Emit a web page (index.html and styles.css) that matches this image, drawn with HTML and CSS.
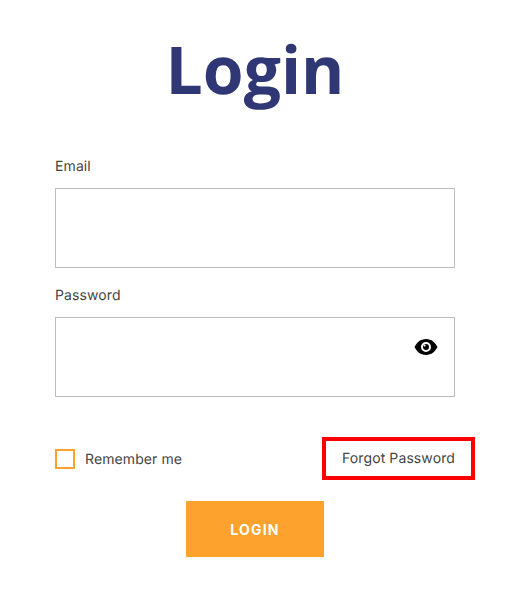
FILE: index.html
```html
<!DOCTYPE html>
<html lang="en">
<head>
<meta charset="utf-8">
<title>Login</title>
<link rel="stylesheet" href="styles.css">
</head>
<body>
<main class="page">
  <h1 class="title">Login</h1>
  <form class="form">
    <div class="field">
      <label class="label" for="email">Email</label>
      <input class="input" id="email" type="text">
    </div>
    <div class="field">
      <label class="label" for="password">Password</label>
      <div class="input-wrap">
        <input class="input" id="password" type="password">
        <svg class="eye" viewBox="0 0 24 18" aria-hidden="true"><path fill-rule="evenodd" d="M12 1C6.6 1 2.6 4.6.5 9c2.1 4.400 6.100 8 11.500 8s9.400-3.600 11.500-8C21.400 4.600 17.400 1 12 1zm0 3a5 5 0 1 1 0 10 5 5 0 0 1 0-10zm0 2a3 3 0 1 0 0 6 3 3 0 0 0 0-6z"/><circle class="glint" cx="10.600" cy="7.600" r="1"/></svg>
      </div>
    </div>
    <div class="options">
      <label class="remember"><span class="box"></span><span class="remember-text">Remember me</span></label>
      <a class="forgot">Forgot Password</a>
    </div>
    <div class="actions">
      <button class="submit" type="button">LOGIN</button>
    </div>
  </form>
</main>
</body>
</html>
```
FILE: styles.css
```css
* { box-sizing: border-box; }
html, body { margin: 0; padding: 0; background: #fff; }
body { font-family: Inter, "Liberation Sans", sans-serif; color: #444; text-rendering: geometricPrecision; }
.page { width: 515px; padding: 0 60px 0 55px; }
.title {
  margin: 0;
  padding-top: 29px;
  height: 148px;
  font-family: "Open Sans", sans-serif;
  font-size: 66px;
  line-height: 80px;
  font-weight: 700;
  color: #303775;
  text-align: center;
}
.field { display: flex; flex-direction: column; }
.label { font-size: 14px; line-height: 20px; height: 40px; padding-top: 9px; letter-spacing: 0.1px; }
.input {
  display: block;
  width: 100%;
  height: 80px;
  border: 1px solid #bdbdbd;
  background: #fff;
  outline: none;
  padding: 0 14px;
}
.field + .field { margin-top: 9px; }
.input-wrap { position: relative; }
.eye { position: absolute; right: 17px; top: 21px; width: 24px; height: 18px; fill: #000; }
.glint { fill: #fff; }
.options {
  display: flex;
  justify-content: space-between;
  align-items: center;
  margin-top: 40px;
  margin-right: -20px;
}
.remember { display: flex; align-items: center; gap: 10px; font-size: 14px; letter-spacing: 0.1px; }
.remember-text { padding-top: 2px; }
.box { width: 20px; height: 20px; border: 2px solid #fda22d; }
.forgot {
  display: flex;
  align-items: center;
  justify-content: center;
  width: 153px;
  height: 43px;
  padding-bottom: 1px;
  border: 4px solid #ff0000;
  font-size: 14px;
  letter-spacing: 0.1px;
}
.actions { display: flex; justify-content: center; margin-top: 21px; }
.submit {
  width: 138px;
  height: 56px;
  border: 0;
  background: #fda22d;
  color: #fff;
  font-family: inherit;
  font-size: 14px;
  font-weight: 700;
  letter-spacing: 1.2px;
}
```
